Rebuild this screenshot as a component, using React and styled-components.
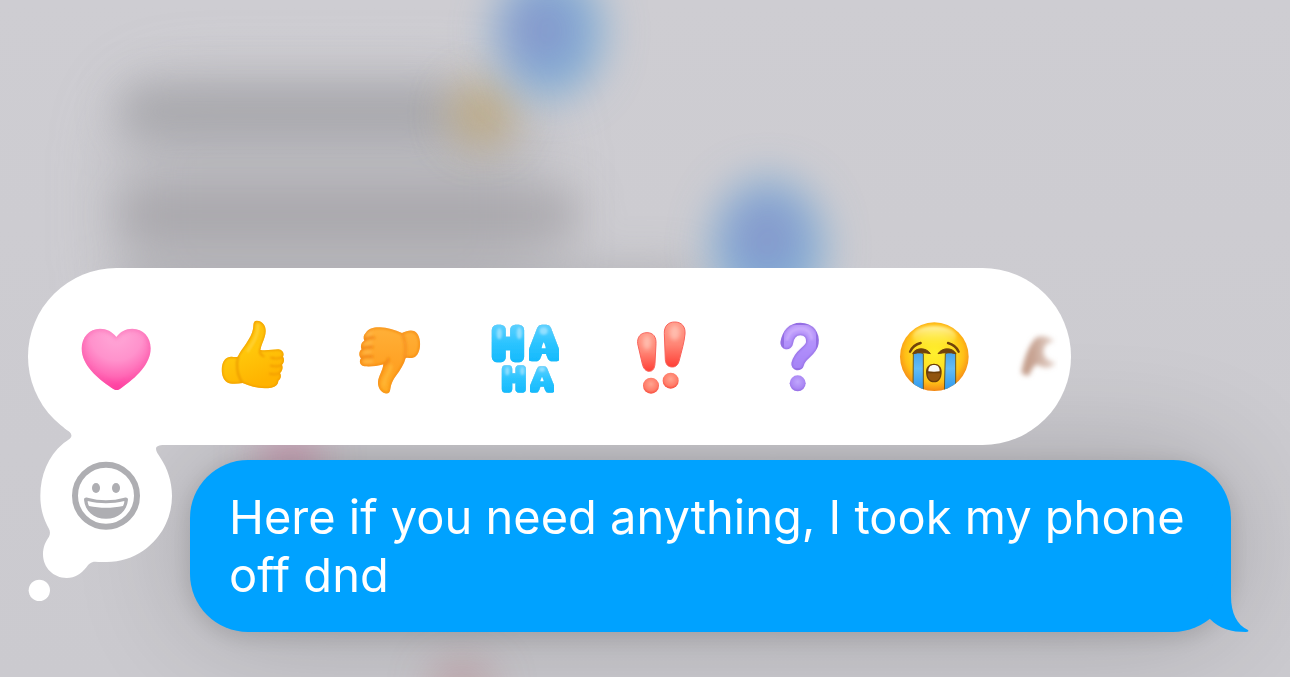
import React from "react";
import styled, { createGlobalStyle } from "styled-components";

const heartPath =
  "M169 108 C156 91 140 83 120 83 C88 83 65 109 65 142 C65 193 113 232 154 260 C161 265 165 267 170 267 C175 267 179 264 185 260 C227 231 272 190 272 142 C272 108 249 83 217 83 C197 83 181 92 169 108 Z";

const HeartIcon = () => (
  <svg viewBox="48 48 240 240">
    <defs>
      <radialGradient id="heart" gradientUnits="userSpaceOnUse" cx="169" cy="100" r="175">
        <stop offset="0" stopColor="#ffa9d8" />
        <stop offset="0.45" stopColor="#ff92cc" />
        <stop offset="0.72" stopColor="#ff68b5" />
        <stop offset="1" stopColor="#ff2492" />
      </radialGradient>
      <clipPath id="heartClip">
        <path d={heartPath} />
      </clipPath>
      <filter id="heartSoft">
        <feGaussianBlur stdDeviation="6" />
      </filter>
    </defs>
    <path d={heartPath} fill="url(#heart)" />
    <g clipPath="url(#heartClip)">
      <path d={heartPath} fill="none" stroke="#fb5fae" strokeWidth="11" opacity="0.6" filter="url(#heartSoft)" />
    </g>
  </svg>
);

const thumbUpPath =
  "M587 60 C596 57 606 62 613 71 C620 82 619 96 615 108 C611 121 605 133 602 147 C622 149 642 145 656 145 C669 146 675 157 670 167 C675 174 674 185 667 191 C671 200 668 211 661 216 C666 224 664 234 656 239 C656 250 648 257 635 260 C606 265 574 258 549 246 C532 249 512 250 502 244 C489 236 484 214 487 196 C490 177 501 166 516 167 C523 168 529 169 534 167 C541 152 550 141 559 128 C570 112 577 99 580 84 C582 73 580 63 587 60 Z";

const ThumbUpIcon = () => (
  <svg viewBox="457 48 240 240">
    <defs>
      <linearGradient id="thumbUp" x1="0" y1="0" x2="0.4" y2="1">
        <stop offset="0" stopColor="#ffbd0b" />
        <stop offset="0.55" stopColor="#ffc60a" />
        <stop offset="1" stopColor="#ffb300" />
      </linearGradient>
      <clipPath id="thumbUpClip">
        <path d={thumbUpPath} />
      </clipPath>
      <filter id="thumbUpSoft">
        <feGaussianBlur stdDeviation="3" />
      </filter>
    </defs>
    <path d={thumbUpPath} fill="url(#thumbUp)" />
    <g clipPath="url(#thumbUpClip)">
      <g filter="url(#thumbUpSoft)" fill="none" strokeLinecap="round">
        <path d={thumbUpPath} stroke="#f09c00" strokeWidth="6" />
        <path d="M535 168 C529 190 531 222 549 246" stroke="#ed9c00" strokeWidth="6" />
        <path d="M602 147 C597 155 604 162 612 166" stroke="#f29f00" strokeWidth="6" />
        <path d="M670 168 C655 175 644 173 634 170 M667 192 C655 198 644 197 633 194 M660 216 C651 221 640 221 630 218" stroke="#f29b00" strokeWidth="5" />
        <path d="M595 72 C597 104 579 126 565 149" stroke="#ffd130" strokeWidth="9" />
      </g>
    </g>
  </svg>
);

const thumbDownPath =
  "M77 96 C85 84 99 79 116 79 C139 78 163 86 186 96 C199 90 211 86 222 90 C236 96 242 117 240 136 C238 156 229 170 216 171 C210 172 204 169 197 171 C192 190 181 207 168 224 C159 236 153 248 151 264 C150 275 144 280 135 277 C122 273 113 259 114 243 C116 224 128 210 130 190 C111 196 91 197 74 196 C60 195 56 181 63 172 C56 165 56 151 65 145 C60 136 64 123 73 119 C69 110 71 101 77 96 Z";

const ThumbDownIcon = () => (
  <svg viewBox="27 48 240 240">
    <defs>
      <linearGradient id="thumbDown" x1="0" y1="0" x2="0" y2="1">
        <stop offset="0" stopColor="#ffb038" />
        <stop offset="0.6" stopColor="#ffa123" />
        <stop offset="1" stopColor="#ffae26" />
      </linearGradient>
      <clipPath id="thumbDownClip">
        <path d={thumbDownPath} />
      </clipPath>
      <filter id="thumbDownSoft">
        <feGaussianBlur stdDeviation="4" />
      </filter>
    </defs>
    <path d={thumbDownPath} fill="url(#thumbDown)" />
    <g clipPath="url(#thumbDownClip)">
      <g filter="url(#thumbDownSoft)" fill="none" strokeLinecap="round">
        <path d={thumbDownPath} stroke="#f2850f" strokeWidth="6" />
        <path d="M186 97 C197 119 199 145 194 170" stroke="#f68d1b" strokeWidth="7" />
        <path d="M71 119 C82 110 92 109 103 110 M64 145 C75 137 86 137 98 139 M63 172 C75 163 87 165 98 167" stroke="#ee7d0c" strokeWidth="6" />
        <path d="M130 190 C140 187 145 180 145 173" stroke="#f0820e" strokeWidth="7" />
        <path d="M153 195 C147 221 132 230 132 252" stroke="#ffb735" strokeWidth="10" />
        <path d="M83 102 L93 96 M76 129 L92 125 M74 155 L90 153 M74 182 L95 181" stroke="#ffb846" strokeWidth="8" />
      </g>
    </g>
  </svg>
);

const HahaText = styled.text`
  font-family: "Liberation Sans", Arial, sans-serif;
  font-weight: 400;
  font-size: ${({ $size }) => $size}px;
  fill: url(#haha);
  stroke: url(#haha);
  stroke-width: ${({ $stroke }) => $stroke}px;
  stroke-linejoin: round;
`;

const HahaIcon = () => (
  <svg viewBox="435 48 240 240">
    <defs>
      <linearGradient id="haha" x1="0" y1="0" x2="0" y2="1">
        <stop offset="0.1" stopColor="#58cfff" />
        <stop offset="0.5" stopColor="#2bc4ff" />
        <stop offset="1" stopColor="#12b8fc" />
      </linearGradient>
      <filter id="hahaEdge">
        <feMorphology in="SourceAlpha" operator="erode" radius="1" result="inner" />
        <feGaussianBlur in="inner" stdDeviation="2" result="core" />
        <feFlood floodColor="#0a9fe4" />
        <feComposite in2="SourceAlpha" operator="in" />
        <feComposite in2="core" operator="out" result="rim" />
        <feMerge>
          <feMergeNode in="SourceGraphic" />
          <feMergeNode in="rim" />
        </feMerge>
      </filter>
      <filter id="hahaSoft">
        <feGaussianBlur stdDeviation="3" />
      </filter>
    </defs>
    <g filter="url(#hahaEdge)">
      <HahaText $size={118} $stroke={31} x={461} y={169}>H</HahaText>
    </g>
    <g filter="url(#hahaEdge)">
      <HahaText $size={108} $stroke={32} x={576} y={165}>A</HahaText>
    </g>
    <g filter="url(#hahaEdge)">
      <HahaText $size={88} $stroke={23} x={490} y={265}>H</HahaText>
    </g>
    <g filter="url(#hahaEdge)">
      <HahaText $size={84} $stroke={23} x={578} y={264}>A</HahaText>
    </g>
    <g fill="#fff">
      <path d="M611 124 C614 128 616 135 617 142 H605 C606 135 608 128 611 124 Z" />
      <path d="M606 228 C608 231 610 236 611 241 H601 C602 236 604 231 606 228 Z" />
    </g>
    <g fill="#a9e6ff" opacity="0.75" filter="url(#hahaSoft)">
      <ellipse cx="478" cy="98" rx="8" ry="17" />
      <ellipse cx="538" cy="97" rx="8" ry="18" />
      <ellipse cx="611" cy="90" rx="12" ry="11" />
      <ellipse cx="502" cy="211" rx="6" ry="12" />
      <ellipse cx="547" cy="210" rx="6" ry="12" />
      <ellipse cx="606" cy="205" rx="9" ry="7" />
    </g>
  </svg>
);

const ExclaimIcon = () => (
  <svg viewBox="4 48 240 240">
    <defs>
      <linearGradient id="bang" x1="0" y1="0" x2="0" y2="1">
        <stop offset="0" stopColor="#ff9a88" />
        <stop offset="0.5" stopColor="#ff8575" />
        <stop offset="1" stopColor="#ff3f36" />
      </linearGradient>
      <radialGradient id="bangDot" cx="0.5" cy="0.4" r="0.6">
        <stop offset="0" stopColor="#ffa590" />
        <stop offset="0.7" stopColor="#ff7c69" />
        <stop offset="1" stopColor="#f84c3c" />
      </radialGradient>
      <filter id="bangSoft">
        <feGaussianBlur stdDeviation="6" />
      </filter>
    </defs>
    <g fill="url(#bang)" stroke="#f9625a" strokeWidth="3">
      <path d="M54 128 C52 108 63 95 82 95 C101 95 110 108 109 128 L106 187 C105 203 99 211 89 211 C78 211 71 202 68 189 Z" />
      <path d="M134 98 C133 76 145 63 165 63 C186 63 198 77 196 99 C194 123 186 149 179 177 C176 191 169 198 158 198 C145 198 138 190 137 176 Z" />
    </g>
    <g fill="#ffc6b8" opacity="0.8" filter="url(#bangSoft)">
      <ellipse cx="82" cy="125" rx="13" ry="22" />
      <ellipse cx="165" cy="95" rx="16" ry="23" />
    </g>
    <circle cx="94" cy="254" r="24" fill="url(#bangDot)" />
    <circle cx="153" cy="239" r="24" fill="url(#bangDot)" />
  </svg>
);

const questionPath = "M500 126 C504 99 519 84 541 84 C568 84 580 104 577 126 C574 151 539 158 533 189";

const QuestionIcon = () => (
  <svg viewBox="414 48 240 240">
    <defs>
      <linearGradient id="quest" gradientUnits="userSpaceOnUse" x1="0" y1="66" x2="0" y2="208">
        <stop offset="0" stopColor="#c4a3fb" />
        <stop offset="0.5" stopColor="#b08ffb" />
        <stop offset="1" stopColor="#a582f6" />
      </linearGradient>
      <radialGradient id="questDot" cx="0.5" cy="0.4" r="0.6">
        <stop offset="0" stopColor="#c0a6fd" />
        <stop offset="0.7" stopColor="#ab88f4" />
        <stop offset="1" stopColor="#946ce4" />
      </radialGradient>
      <filter id="questSoft">
        <feGaussianBlur stdDeviation="3" />
      </filter>
    </defs>
    <g fill="none" strokeLinecap="round" strokeLinejoin="round">
      <path d={questionPath} stroke="#956fe4" strokeWidth="38" />
      <path d={questionPath} stroke="url(#quest)" strokeWidth="32" filter="url(#questSoft)" />
      <path d="M501 116 C507 94 523 82 543 83 C561 83 575 96 575 114" stroke="#d8beff" strokeWidth="7" opacity="0.6" filter="url(#questSoft)" />
    </g>
    <circle cx="533" cy="247" r="24" fill="url(#questDot)" />
  </svg>
);

const CryIcon = () => (
  <svg viewBox="42 48 240 240">
    <defs>
      <radialGradient id="face" gradientUnits="userSpaceOnUse" cx="163" cy="157" r="113">
        <stop offset="0" stopColor="#fff02e" />
        <stop offset="0.5" stopColor="#ffe022" />
        <stop offset="0.78" stopColor="#ffbe16" />
        <stop offset="0.92" stopColor="#f99c17" />
        <stop offset="1" stopColor="#f18714" />
      </radialGradient>
      <linearGradient id="shine" x1="0" y1="0" x2="0" y2="1">
        <stop offset="0" stopColor="#fffbc0" stopOpacity="0.85" />
        <stop offset="1" stopColor="#fff45a" stopOpacity="0" />
      </linearGradient>
      <linearGradient id="tear" x1="0" y1="0" x2="0" y2="1">
        <stop offset="0" stopColor="#4aa3e8" />
        <stop offset="0.4" stopColor="#63bcf6" />
        <stop offset="1" stopColor="#2793ea" />
      </linearGradient>
      <clipPath id="faceClip">
        <circle cx="163" cy="167" r="103" />
      </clipPath>
      <filter id="shineSoft">
        <feGaussianBlur stdDeviation="4" />
      </filter>
    </defs>
    <circle cx="163" cy="167" r="103" fill="url(#face)" />
    <ellipse cx="163" cy="106" rx="66" ry="31" fill="url(#shine)" filter="url(#shineSoft)" />
    <g clipPath="url(#faceClip)" fill="url(#tear)" stroke="#6b5a20" strokeWidth="3">
      <path d="M100 158 C108 153 120 153 130 158 V275 H99 Z" />
      <path d="M196 158 C206 153 218 153 227 158 V275 H193 Z" />
    </g>
    <g fill="none" stroke="#71430b" strokeLinecap="round">
      <path d="M90 152 C96 139 106 130 122 126" strokeWidth="7" />
      <path d="M204 126 C219 130 230 139 236 152" strokeWidth="7" />
    </g>
    <g fill="#71430b">
      <path d="M98 158 C106 139 139 138 151 158 C134 154 117 154 98 158 Z" stroke="#71430b" strokeWidth="3" strokeLinejoin="round" />
      <path d="M174 158 C187 138 218 139 228 158 C211 154 194 154 174 158 Z" stroke="#71430b" strokeWidth="3" strokeLinejoin="round" />
    </g>
    <path d="M138 212 C138 197 148 188 162 188 C176 188 185 197 185 212 C185 232 177 244 162 244 C147 244 138 232 138 212 Z" fill="#6d3e08" />
    <path d="M143 217 H181 C181 231 174 240 162 240 C150 240 143 231 143 217 Z" fill="#91540f" />
    <path d="M145 211 C145 198 151 192 162 192 C173 192 179 198 179 211 C169 213 155 213 145 211 Z" fill="#fafafa" />
  </svg>
);

const reactions = [
  { label: "Love", icon: HeartIcon },
  { label: "Like", icon: ThumbUpIcon },
  { label: "Dislike", icon: ThumbDownIcon },
  { label: "Laugh", icon: HahaIcon },
  { label: "Emphasize", icon: ExclaimIcon },
  { label: "Question", icon: QuestionIcon },
  { label: "Crying", icon: CryIcon },
];

// blurred conversation that sits behind the open menu
const Conversation = () => (
  <Backdrop viewBox="0 0 1290 677" preserveAspectRatio="none" aria-hidden="true">
    <defs>
      <filter id="blur" x="-80%" y="-80%" width="260%" height="260%">
        <feGaussianBlur stdDeviation="21" />
      </filter>
      <filter id="haze" x="-40%" y="-60%" width="180%" height="220%">
        <feGaussianBlur stdDeviation="34" />
      </filter>
      <linearGradient id="base" x1="0" y1="0" x2="0" y2="1">
        <stop offset="0" stopColor="#cecdd2" />
        <stop offset="1" stopColor="#cbcacf" />
      </linearGradient>
    </defs>
    <rect width="1290" height="677" fill="url(#base)" />
    <rect x="120" y="85" width="420" height="240" rx="60" fill="#b4b3b8" opacity="0.7" filter="url(#haze)" />
    <g filter="url(#blur)">
      <rect x="120" y="86" width="335" height="50" rx="20" fill="#9d9ca1" opacity="0.7" />
      <rect x="118" y="190" width="462" height="50" rx="20" fill="#9f9ea3" opacity="0.7" />
      <rect x="118" y="266" width="580" height="50" rx="20" fill="#aaa9ae" opacity="0.7" />
    </g>
    <circle cx="482" cy="114" r="33" fill="#bd9f5e" opacity="0.6" filter="url(#blur)" />
    <g filter="url(#blur)">
      <ellipse cx="549" cy="32" rx="54" ry="64" fill="#76aad6" opacity="0.9" />
      <ellipse cx="541" cy="30" rx="34" ry="36" fill="#8c8fc8" opacity="0.7" />
    </g>
    <g filter="url(#blur)">
      <ellipse cx="768" cy="246" rx="56" ry="66" fill="#76aad6" opacity="0.9" />
      <ellipse cx="766" cy="236" rx="34" ry="36" fill="#8c8fc8" opacity="0.7" />
    </g>
    <g filter="url(#blur)">
      <ellipse cx="290" cy="456" rx="34" ry="18" fill="#cf7a9f" opacity="0.75" />
      <ellipse cx="462" cy="686" rx="32" ry="22" fill="#bd868c" opacity="0.6" />
    </g>
  </Backdrop>
);

const App = () => {
  return (
    <Screen>
      <GlobalStyle />
      <Conversation />
      <ReactionBar aria-label="Reactions">
        {reactions.map(({ label, icon: Icon }) => (
          <Reaction type="button" key={label} aria-label={label}>
            <Icon />
          </Reaction>
        ))}
        <PeekReaction type="button" aria-label="More reactions">
          <svg viewBox="366 48 168 240">
            <defs>
              <filter id="peek" x="-60%" y="-60%" width="220%" height="220%">
                <feGaussianBlur stdDeviation="8" />
              </filter>
              <linearGradient id="peekFade">
                <stop offset="0.3" stopColor="#c6a190" />
                <stop offset="1" stopColor="#c6a190" stopOpacity="0.4" />
              </linearGradient>
            </defs>
            <path
              d="M424 214 C430 180 443 140 464 114 C478 100 504 106 524 120 C510 124 496 128 492 142 C486 160 494 178 528 186 C514 204 492 204 470 190 C460 196 454 208 448 222 C440 226 428 222 424 214 Z"
              fill="url(#peekFade)"
              filter="url(#peek)"
            />
          </svg>
        </PeekReaction>
      </ReactionBar>
      <MessageRow>
        <PickerButton type="button" aria-label="Choose an emoji">
          <svg viewBox="54 63 432 540">
            <path
              fill="#fff"
              d="M150 70 L165 86 C178 94 186 100 184 109 C183 117 170 122 158 132 C115 168 91 225 91 288 C91 325 100 355 116 385 C121 394 121 402 117 410 C106 425 99 442 99 463 C99 503 130 534 170 534 C196 534 214 520 228 503 C236 492 242 485 256 485 C270 486 280 486 290 486 C400 486 486 395 486 288 C486 245 472 205 452 175 C445 163 438 155 438 147 C438 138 447 135 462 135 L462 100 L200 63 Z"
            />
            <circle cx="88" cy="571" r="32" fill="#fff" />
            <g fill="#aeaeb2">
              <circle cx="288" cy="287" r="93" fill="none" stroke="#aeaeb2" strokeWidth="18" />
              <ellipse cx="258" cy="264" rx="12" ry="15" />
              <ellipse cx="318" cy="264" rx="12" ry="15" />
              <path d="M222 299 C222 293 227 291 233 293 C269 303 307 303 343 293 C349 291 354 293 354 299 C351 333 325 356 288 356 C251 356 225 333 222 299 Z" />
            </g>
            <path fill="#fff" d="M233 303 C269 312 307 312 343 303 C343 309 341 314 339 318 C306 325 270 325 237 318 C235 314 233 309 233 303 Z" />
          </svg>
        </PickerButton>
        <Message>
          Here if you need anything, I took my phone off dnd
          <Tail viewBox="0 0 48 72" aria-hidden="true">
            <path d="M0 52 L20 0 L29 0 V36 C29 53 35 65 46 70 C47 71 46 72 44 72 C29 72 18 69 8 59 Z" fill="#00a2ff" />
          </Tail>
        </Message>
      </MessageRow>
    </Screen>
  );
};

const GlobalStyle = createGlobalStyle`
  * {
    box-sizing: border-box;
  }
  body {
    margin: 0;
    background: #cbcacf;
    font-family: Inter, "Liberation Sans", sans-serif;
  }
`;

const Screen = styled.main`
  position: relative;
  min-height: 100vh;
  padding: 268px 59px 46px 28px;
  overflow: hidden;
`;

const Backdrop = styled.svg`
  position: absolute;
  inset: 0;
  width: 100%;
  height: 100%;
`;

const ReactionBar = styled.section`
  position: relative;
  z-index: 1;
  display: flex;
  align-items: center;
  height: 177px;
  margin-right: 160px;
  padding: 0 13px 0 20px;
  border-radius: 90px;
  background: #fff;
  overflow: hidden;
`;

const Reaction = styled.button`
  flex: 1;
  display: flex;
  justify-content: center;
  padding: 0;
  border: 0;
  background: none;
  cursor: pointer;
  svg {
    width: 80px;
    height: 80px;
  }
`;

const PeekReaction = styled(Reaction)`
  flex: 0 0 56px;
  svg {
    width: 56px;
  }
`;

const MessageRow = styled.div`
  display: flex;
  align-items: flex-start;
  gap: 18px;
`;

const PickerButton = styled.button`
  position: relative;
  z-index: 2;
  flex: 0 0 144px;
  margin-top: -24px;
  padding: 0;
  border: 0;
  background: none;
  cursor: pointer;
  svg {
    display: block;
    width: 144px;
    height: 180px;
  }
`;

const Message = styled.p`
  position: relative;
  flex: 1;
  margin: 15px 0 0;
  padding: 28px 39px;
  border-radius: 58px;
  background: #00a2ff;
  box-shadow: 0 4px 24px rgba(0, 0, 0, 0.14), 0 0 120px rgba(0, 0, 0, 0.2);
  color: #fff;
  font-size: 47px;
  line-height: 58px;
`;

const Tail = styled.svg`
  position: absolute;
  right: -19px;
  bottom: 0;
  width: 48px;
  height: 72px;
`;

export default App;
